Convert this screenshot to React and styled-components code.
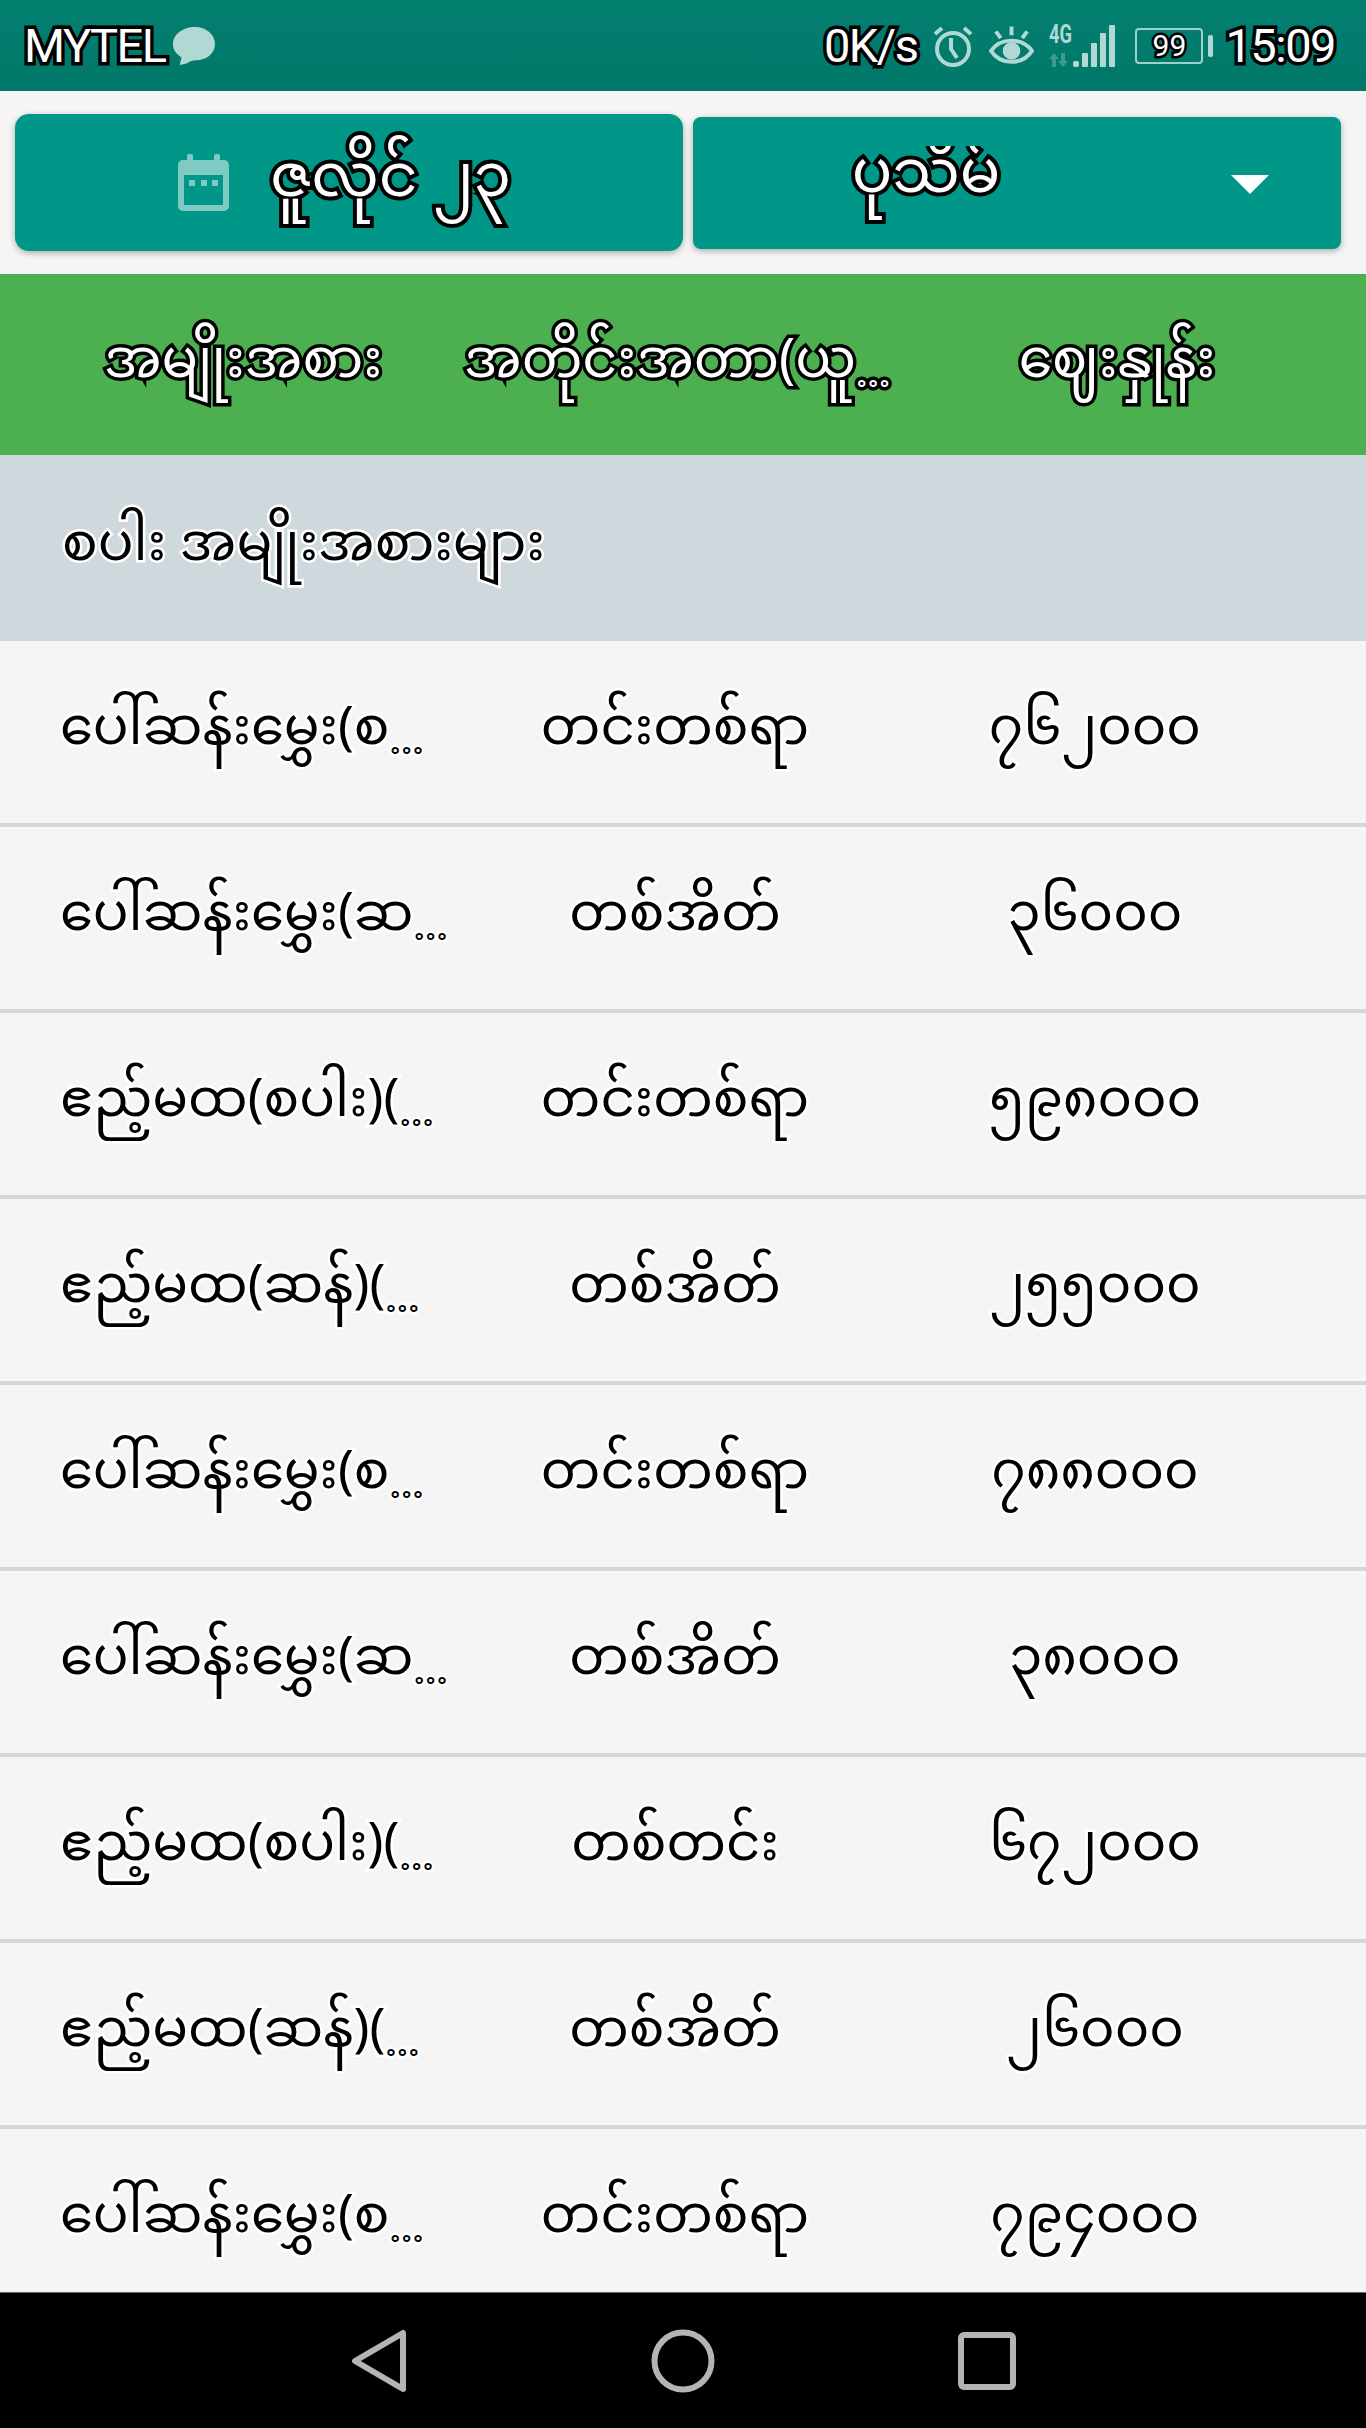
import React from 'react'
import styled, { createGlobalStyle } from 'styled-components'

const GlobalStyle = createGlobalStyle`
    html, body {
        margin: 0;
        padding: 0;
        background: #f5f5f5;
    }
`

const Page = styled.div`
    width: 1366px;
    height: 2428px;
    display: flex;
    flex-direction: column;
    overflow: hidden;
    background: #f5f5f5;
    font-family: "Noto Sans Myanmar", "Noto Sans", "Liberation Sans", sans-serif;
`

const StatusBar = styled.div`
    height: 91px;
    flex: none;
    display: flex;
    align-items: center;
    justify-content: space-between;
    padding: 0 31px 0 24px;
    box-sizing: border-box;
    background: linear-gradient(#037f70, #00786a);
`

const StatusGroup = styled.div`
    display: flex;
    align-items: center;
    gap: ${props => props.$gap}px;
`

const StatusText = styled.span`
    font-family: "Roboto", "Liberation Sans", sans-serif;
    font-size: 47px;
    color: #fff;
    -webkit-text-stroke: 7px #000;
    paint-order: stroke fill;
    letter-spacing: -1.5px;
    white-space: nowrap;
`

const BatteryWrap = styled.div`
    width: 68px;
    height: 36px;
    position: relative;
    display: flex;
    align-items: center;
    justify-content: center;
    box-sizing: border-box;
    border: 2px solid #9fd0ca;
    border-radius: 4px;
    margin: 0 7px 0 5px;

    &::after {
        content: '';
        position: absolute;
        right: -12px;
        top: 5px;
        width: 5px;
        height: 22px;
        border-radius: 2px;
        background: #b2d8d3;
    }
`

const BatteryText = styled.span`
    font-family: "Roboto", "Liberation Sans", sans-serif;
    font-size: 30px;
    color: #fff;
    -webkit-text-stroke: 5px #000;
    paint-order: stroke fill;
`

const Toolbar = styled.div`
    height: 183px;
    flex: none;
    display: flex;
    align-items: center;
    gap: 10px;
    padding: 0 25px 0 15px;
    box-sizing: border-box;
`

const DateButton = styled.div`
    width: 668px;
    height: 137px;
    flex: none;
    display: flex;
    align-items: center;
    justify-content: center;
    gap: 41px;
    padding-right: 9px;
    box-sizing: border-box;
    background: #009688;
    border-radius: 14px;
    box-shadow: 0 2px 6px rgba(0, 0, 0, 0.3);
`

const CityButton = styled.div`
    width: 648px;
    height: 132px;
    flex: none;
    position: relative;
    display: flex;
    justify-content: center;
    padding-right: 182px;
    box-sizing: border-box;
    background: #009688;
    border-radius: 8px;
    box-shadow: 0 2px 6px rgba(0, 0, 0, 0.3);
`

const Arrow = styled.span`
    position: absolute;
    right: 72px;
    top: 58px;
    width: 0;
    height: 0;
    border-left: 19px solid transparent;
    border-right: 19px solid transparent;
    border-top: 19px solid #fff;
`

const OutlinedWhite = styled.span`
    font-size: 60px;
    color: #fff;
    -webkit-text-stroke: 8px #000;
    paint-order: stroke fill;
    white-space: nowrap;
`

// the spinner cuts off the top marks of the city name
const CityLabel = styled(OutlinedWhite)`
    display: block;
    align-self: flex-end;
    height: 103px;
    padding: 0 6px;
    line-height: 66px;
    overflow: hidden;
`

const Header = styled.div`
    height: 181px;
    flex: none;
    display: grid;
    grid-template-columns: 442px 426px 1fr;
    align-items: center;
    padding: 0 22px;
    box-sizing: border-box;
    background: #4caf50;
`

const HeaderCell = styled(OutlinedWhite)`
    font-size: 54px;
    -webkit-text-stroke-width: 7px;
    text-align: center;
`

const Section = styled.div`
    height: 186px;
    flex: none;
    display: flex;
    align-items: center;
    padding-left: 62px;
    box-sizing: border-box;
    background: #cfd8dc;
    border-bottom: 1px solid #d3d5d6;
`

const DarkText = styled.span`
    font-size: 53px;
    color: #000;
    -webkit-text-stroke: 5px #fff;
    paint-order: stroke fill;
    white-space: nowrap;
`

const Rows = styled.div`
    flex: 1;
    min-height: 0;
    overflow: hidden;
`

const Row = styled.div`
    height: 186px;
    display: grid;
    grid-template-columns: 452px 446px 394px;
    align-items: center;
    box-sizing: border-box;
    border-bottom: 4px solid #d6d6d6;
`

const NameCell = styled(DarkText)`
    padding-left: 60px;
`

const CenterCell = styled(DarkText)`
    text-align: center;
`

const Dots = styled.span`
    font-size: 33px;
    vertical-align: -10px;
`

const NavBar = styled.div`
    height: 136px;
    flex: none;
    display: flex;
    align-items: center;
    justify-content: center;
    gap: 240px;
    background: #000;
    border-top: 1px solid #666;
    box-sizing: border-box;
`

const NavIcon = styled.svg`
    width: 64px;
    height: 64px;
    fill: none;
    stroke: #b4b4b4;
    stroke-width: 6;
    stroke-linejoin: round;
`

const rows = [
    ['ပေါ်ဆန်းမွှေး(စ', 'တင်းတစ်ရာ', '၇၆၂၀၀၀'],
    ['ပေါ်ဆန်းမွှေး(ဆ', 'တစ်အိတ်', '၃၆၀၀၀'],
    ['ဧည့်မထ(စပါး)(', 'တင်းတစ်ရာ', '၅၉၈၀၀၀'],
    ['ဧည့်မထ(ဆန်)(', 'တစ်အိတ်', '၂၅၅၀၀၀'],
    ['ပေါ်ဆန်းမွှေး(စ', 'တင်းတစ်ရာ', '၇၈၈၀၀၀'],
    ['ပေါ်ဆန်းမွှေး(ဆ', 'တစ်အိတ်', '၃၈၀၀၀'],
    ['ဧည့်မထ(စပါး)(', 'တစ်တင်း', '၆၇၂၀၀၀'],
    ['ဧည့်မထ(ဆန်)(', 'တစ်အိတ်', '၂၆၀၀၀'],
    ['ပေါ်ဆန်းမွှေး(စ', 'တင်းတစ်ရာ', '၇၉၄၀၀၀'],
]

const App = () => {
    return (
        <>
            <GlobalStyle />
            <Page>
                <StatusBar>
                    <StatusGroup $gap={6}>
                        <StatusText>MYTEL</StatusText>
                        <svg width="43" height="40" viewBox="0 0 45 40">
                            <path d="M24 0c12 0 21 8 21 18S36 35 25 35c-3 0-6 1-9 3l-8 2 2-8C4 28 1 24 1 18 1 8 11 0 24 0z" fill="#b2d8d3" />
                        </svg>
                    </StatusGroup>
                    <StatusGroup $gap={15}>
                        <StatusText>0K/s</StatusText>
                        <svg width="42" height="42" viewBox="0 0 42 42" fill="none" stroke="#b2d8d3" strokeWidth="4">
                            <circle cx="21" cy="24" r="16" />
                            <path d="M19 13v11l6 9M3 9l7-6M39 9l-7-6" />
                        </svg>
                        <svg width="45" height="40" viewBox="0 0 46 40" fill="none" stroke="#b2d8d3" strokeWidth="4">
                            <path d="M2 25c10-14 32-14 42 0-10 15-32 15-42 0z" />
                            <circle cx="23" cy="25" r="7" fill="#b2d8d3" />
                            <path d="M23 0v9M7 5l5 7M39 5l-5 7" />
                        </svg>
                        <svg width="66" height="42" viewBox="0 0 66 42" fill="#b2d8d3" overflow="visible">
                            <text x="0" y="18" fontSize="25" fontWeight="700" fontFamily="Roboto" textLength="23" lengthAdjust="spacingAndGlyphs">4G</text>
                            <path d="M5 28l5 6H7v8H3v-8H0zM14 42l-5-6h3v-8h4v8h3z" opacity="0.35" />
                            <rect x="24" y="36" width="6" height="6" rx="2" />
                            <rect x="33" y="28" width="6" height="14" rx="1" />
                            <rect x="42" y="18" width="6" height="24" rx="1" />
                            <rect x="51" y="8" width="6" height="34" rx="1" />
                            <rect x="60" y="0" width="6" height="42" rx="1" />
                        </svg>
                        <BatteryWrap>
                            <BatteryText>99</BatteryText>
                        </BatteryWrap>
                        <StatusText>15:09</StatusText>
                    </StatusGroup>
                </StatusBar>

                <Toolbar>
                    <DateButton>
                        <svg width="51" height="57" viewBox="0 0 51 57" fill="#7fcac3">
                            <rect x="9" y="0" width="6" height="12" rx="2" />
                            <rect x="36" y="0" width="6" height="12" rx="2" />
                            <path fillRule="evenodd" d="M5 6h41a5 5 0 0 1 5 5v41a5 5 0 0 1-5 5H5a5 5 0 0 1-5-5V11a5 5 0 0 1 5-5zM6 21v30h39V21z" />
                            <rect x="11" y="26" width="6" height="6" />
                            <rect x="23" y="26" width="6" height="6" />
                            <rect x="34" y="26" width="6" height="6" />
                        </svg>
                        <OutlinedWhite>ဇူလိုင် ၂၃</OutlinedWhite>
                    </DateButton>
                    <CityButton>
                        <CityLabel>ပုသိမ်</CityLabel>
                        <Arrow />
                    </CityButton>
                </Toolbar>

                <Header>
                    <HeaderCell>အမျိုးအစား</HeaderCell>
                    <HeaderCell>အတိုင်းအတာ(ယူ<Dots>…</Dots></HeaderCell>
                    <HeaderCell>ဈေးနှုန်း</HeaderCell>
                </Header>

                <Section>
                    <DarkText>စပါး အမျိုးအစားများ</DarkText>
                </Section>

                <Rows>
                    {rows.map((r, i) => (
                        <Row key={i}>
                            <NameCell>{r[0]}<Dots>…</Dots></NameCell>
                            <CenterCell>{r[1]}</CenterCell>
                            <CenterCell>{r[2]}</CenterCell>
                        </Row>
                    ))}
                </Rows>

                <NavBar>
                    <NavIcon viewBox="0 0 64 64">
                        <path d="M56 4v56L8 32z" />
                    </NavIcon>
                    <NavIcon viewBox="0 0 64 64">
                        <circle cx="32" cy="32" r="28.500" />
                    </NavIcon>
                    <NavIcon viewBox="0 0 64 64">
                        <rect x="6" y="6" width="52" height="52" rx="3" />
                    </NavIcon>
                </NavBar>
            </Page>
        </>
    )
}

export default App
